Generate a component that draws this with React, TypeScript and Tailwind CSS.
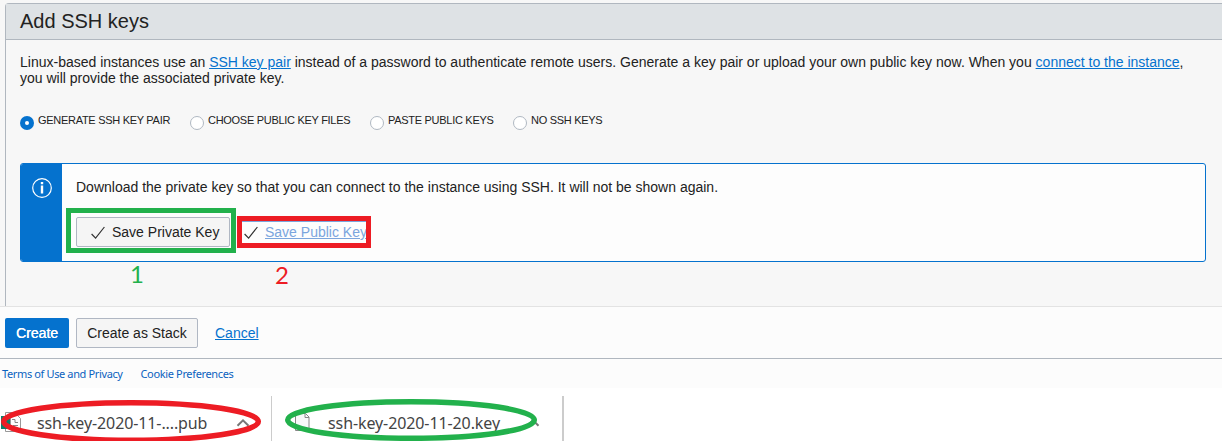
import React from "react";

function Radio({ label, on, className }: { label: string; on?: boolean; className: string }) {
  return (
    <label className={`flex h-5 shrink-0 items-start whitespace-nowrap ${className}`}>
      <span
        className={`mt-[6px] mr-1 flex h-[14px] w-[14px] shrink-0 items-center justify-center rounded-full ${
          on ? "bg-[#0572ce]" : "border border-[#b0b8c2] bg-white"
        }`}
      >
        {on && <span className="h-1 w-1 rounded-full bg-white" />}
      </span>
      <span className="text-[11px] leading-5 tracking-[-0.29px]">{label}</span>
    </label>
  );
}

function Check() {
  return (
    <svg width="14" height="14" viewBox="0 0 14 14" fill="none" stroke="#333" strokeWidth="1.2" className="relative top-px">
      <path d="M0.6 8 L4.6 12.2 L13.4 1" />
    </svg>
  );
}

function Chevron({ className }: { className: string }) {
  return (
    <svg width="14" height="12" viewBox="0 0 14 12" className={className} fill="none" stroke="#777" strokeWidth="2">
      <path d="M1.5 9.8l5.5-5.500 5.500 5.500" />
    </svg>
  );
}

export default function App() {
  return (
    <div className="relative h-[441px] w-full overflow-hidden bg-white font-['Liberation_Sans',Arial,sans-serif] text-sm text-[#222]">
      <section className="h-[306px] bg-[#f7f7f7] pt-[3px] pl-[5px]">
        <div className="h-[303px] rounded-tl-sm border-t border-l border-[#b0b7bf]">
          <h1 className="h-9 border-b border-[#b0b7bf] bg-[#dee2e5] pl-[14px] text-[20px] leading-[34px]">
            Add SSH keys
          </h1>
          <div className="pl-[14px]">
            <p className="mt-[14px] h-8 leading-4 whitespace-nowrap">
              Linux-based instances use an <a className="text-[#0572ce] underline">SSH key pair</a> instead of a password to
              authenticate remote users. Generate a key pair or upload your own public key now. When you{" "}
              <a className="text-[#0572ce] underline">connect to the instance</a>,
              <br />
              you will provide the associated private key.
            </p>
            <div className="mt-6 flex h-5">
              <Radio on label="GENERATE SSH KEY PAIR" className="w-[170px]" />
              <Radio label="CHOOSE PUBLIC KEY FILES" className="w-[180px]" />
              <Radio label="PASTE PUBLIC KEYS" className="w-[143px]" />
              <Radio label="NO SSH KEYS" className="w-[110px]" />
            </div>
            <div className="mt-[33px] flex h-[99px] w-[1186px] overflow-hidden rounded-[3px] border border-[#0572ce] bg-[#fdfdfd]">
              <div className="flex w-[41px] shrink-0 justify-center bg-[#0572ce] pt-[14px]">
                <svg width="20" height="20" viewBox="0 0 20 20" fill="none" stroke="#fff" className="ml-[1px]">
                  <circle cx="10" cy="10" r="9.3" strokeWidth="1.2" />
                  <path d="M10 4v2.200M10 7.500v8" strokeWidth="2.4" />
                </svg>
              </div>
              <div className="pl-[14px]">
                <p className="mt-[15px] leading-4 whitespace-nowrap">
                  Download the private key so that you can connect to the instance using SSH. It will not be shown again.
                </p>
                <div className="mt-[22px] flex h-[30px]">
                  <button className="flex w-[154px] items-center rounded-[2px] border border-[#b0b7c3] bg-[#f5f5f5] pl-[14px]">
                    <Check />
                    <span className="ml-[7px] whitespace-nowrap">Save Private Key</span>
                  </button>
                  <button className="ml-[14px] flex items-center">
                    <Check />
                    <span className="ml-[7px] whitespace-nowrap text-[#7ba5dd] underline">Save Public Key</span>
                  </button>
                </div>
              </div>
            </div>
          </div>
        </div>
      </section>

      <section className="flex h-[53px] items-start border-t border-b border-t-[#e3e3e3] border-b-[#b0b7bf] bg-[#fcfcfc] pt-[11px] pl-[5px]">
        <button className="h-[30px] w-16 rounded-[2px] bg-[#0572ce] font-normal text-white [text-shadow:0.3px_0_0_#fff]">
          Create
        </button>
        <button className="ml-[7px] h-[30px] w-[122px] rounded-[2px] border border-[#b0b7c3] bg-[#f5f5f5] whitespace-nowrap">
          Create as Stack
        </button>
        <a className="ml-[17px] leading-[30px] text-[#0572ce] underline">Cancel</a>
      </section>
      <footer className="flex h-[29px] bg-[#fcfcfc] pl-[2px] font-['Noto_Sans',sans-serif] text-[11px] leading-[29px] whitespace-nowrap text-[#0b62bf]">
        <a className="w-[138.5px] tracking-[-0.37px]">Terms of Use and Privacy</a>
        <a className="tracking-[-0.35px]">Cookie Preferences</a>
      </footer>
      <div className="flex h-[53px] pt-2 font-['Noto_Sans',sans-serif] text-base text-[#444]">
        <div className="flex w-[272px] border-r border-[#ccc]">
          <svg width="22" height="22" viewBox="0 0 22 22" className="mt-[15px] shrink-0" fill="none">
            <path d="M5.5 1.5h8l3 3v16h-11z" stroke="#999" fill="#fff" />
            <path d="M10.5 4.5h7l3 3v10h-10z" stroke="#999" fill="#fff" />
            <path d="M12 8.500h3v3h3M13 14.500h5" stroke="#888" />
            <path d="M1 5h9v13H1z" fill="#0a806c" />
          </svg>
          <span className="ml-[15px] w-[170px] leading-[55px] whitespace-nowrap tracking-[-0.11px]">ssh-key-2020-11-....pub</span>
          <Chevron className="mt-5 ml-[28.5px]" />
        </div>
        <div className="flex w-[292px] border-r-2 border-[#ccc] pl-[23px]">
          <svg width="15" height="20" viewBox="0 0 15 20" className="mt-4 shrink-0" fill="none" stroke="#888">
            <path d="M.5 1.5h10l3.500 3.500v13.500H.5z" fill="#f7f9f9" />
            <path d="M10 1.500v4h4" />
          </svg>
          <span className="ml-[18px] w-[171px] leading-[55px] whitespace-nowrap tracking-[-0.1px]">ssh-key-2020-11-20.key</span>
          <Chevron className="mt-5 ml-[27px]" />
        </div>
      </div>

      <div className="absolute top-[208px] left-[66px] h-[45px] w-[170px] border-5 border-[#22b14c]" />
      <div className="absolute top-[216px] left-[237px] h-8 w-[134px] border-5 border-[#ed1c24]">
        <div className="h-px bg-[#7ba5dd]" />
      </div>
      <span className="absolute top-[260px] left-[130px] font-['Lato',sans-serif] text-[24px] leading-7 text-[#22b14c]">1</span>
      <span className="absolute top-[261px] left-[275px] font-['Lato',sans-serif] text-[24px] leading-7 text-[#ed1c24]">2</span>
      <svg className="absolute top-[395px] left-0" width="560" height="46" viewBox="0 395 560 46" fill="none">
        <ellipse cx="131" cy="421.500" rx="127.300" ry="18.800" stroke="#ed1c24" strokeWidth="5.5" />
        <ellipse cx="411" cy="420" rx="123.300" ry="18.300" stroke="#22b14c" strokeWidth="5.5" />
      </svg>
    </div>
  );
}
